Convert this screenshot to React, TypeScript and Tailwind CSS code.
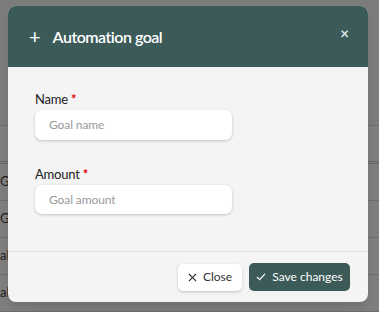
import React from "react";

export default function App() {
  const rows = ["Goal", "Goal", "al", "al"];
  return (
    <div
      className="relative w-[379px] h-[312px] overflow-hidden bg-white"
      style={{ fontFamily: "Lato, 'Noto Sans', sans-serif" }}
    >
      {/* background page */}
      <div className="flex flex-col">
        <div className="h-[126px] bg-[#f9f9f9] border-b border-[#dcdcdc]" />
        <div className="h-[38px] border-b-[3px] border-double border-[#cfcfcf]" />
        {rows.map((r, i) => (
          <div
            key={i}
            className="h-[37px] border-b border-[#dcdcdc] flex items-center text-[13px] text-[#444]"
          >
            {r}
          </div>
        ))}
      </div>
      {/* overlay */}
      <div className="absolute inset-0 bg-[rgba(0,0,0,0.5)]" />
      {/* modal */}
      <div className="absolute left-[8px] top-[6px] w-[360px] rounded-[8px] overflow-hidden bg-[#f4f4f4] shadow-lg">
        <div className="h-[61px] bg-[#3b5a58] flex items-center pl-[21px] pr-[19px]">
          <span className="text-white text-[20px] leading-none font-normal mr-[12px] mt-[-2px]">+</span>
          <span className="text-white text-[16px] font-semibold tracking-[-0.5px]">Automation goal</span>
          <span className="ml-auto text-[#dfe7e6] text-[15px] font-bold leading-none mt-[-6px]">×</span>
        </div>
        <div className="px-[27px] pt-[24px] pb-[37px] border-b border-[#dcdcdc]">
          <div className="text-[13px] text-[#222] font-normal leading-[16px] tracking-[-0.2px]">
            Name <span className="text-[#e60000] font-bold">*</span>
          </div>
          <div className="mt-[3px] w-[197px] h-[30px] bg-white rounded-[7px] shadow-[0_1px_3px_rgba(0,0,0,0.2)] flex items-center pl-[14px] text-[12px] tracking-[-0.1px] text-[#9a9a9a]">
            Goal name
          </div>
          <div className="mt-[26px] text-[13px] text-[#222] font-normal leading-[16px] tracking-[-0.2px]">
            Amount <span className="text-[#e60000] font-bold">*</span>
          </div>
          <div className="mt-[3px] w-[197px] h-[29px] bg-white rounded-[7px] shadow-[0_1px_3px_rgba(0,0,0,0.2)] flex items-center pl-[14px] text-[12px] tracking-[-0.1px] text-[#9a9a9a]">
            Goal amount
          </div>
        </div>
        <div className="h-[50px] flex items-center justify-end gap-[7px] pr-[18px]">
          <div className="w-[64px] h-[27px] bg-white rounded-[5px] shadow-[0_1px_3px_rgba(0,0,0,0.2)] flex items-center justify-center gap-[6px] text-[12px] text-[#333]">
            <svg width="9" height="9" viewBox="0 0 10 10" stroke="#333" strokeWidth="1.4" fill="none">
              <path d="M1 1L9 9M9 1L1 9" />
            </svg>
            Close
          </div>
          <div className="w-[101px] h-[28px] bg-[#3b5a58] rounded-[5px] flex items-center justify-center gap-[6px] text-[12px] text-white font-normal">
            <svg width="10" height="8" viewBox="0 0 11 9" stroke="#fff" strokeWidth="1.4" fill="none">
              <path d="M1 4.5L4 7.5L10 1" />
            </svg>
            Save changes
          </div>
        </div>
      </div>
    </div>
  );
}
